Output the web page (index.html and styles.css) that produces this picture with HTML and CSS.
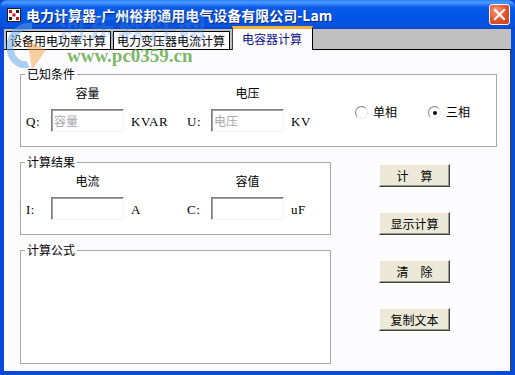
FILE: index.html
```html
<!DOCTYPE html>
<html lang="zh-CN">
<head>
    <meta charset="UTF-8">
    <title>电力计算器</title>
    <link rel="stylesheet" href="styles.css">
</head>
<body>
    <div class="window">
        <div class="titlebar">
            <svg class="app-icon" width="14" height="14" viewBox="0 0 14 14">
                <rect x="0.5" y="0.5" width="13" height="13" fill="#fff" stroke="#202020"/>
                <rect x="2" y="2" width="3" height="3" fill="#d01010"/>
                <rect x="9" y="2" width="3" height="3" fill="#202020"/>
                <rect x="5.5" y="5.5" width="3" height="3" fill="#d01010"/>
                <rect x="2" y="9" width="3" height="3" fill="#202020"/>
                <rect x="9" y="9" width="3" height="3" fill="#d01010"/>
            </svg>
            <span class="title">电力计算器-广州裕邦通用电气设备有限公司-Lam</span>
            <button class="close">
                <svg width="13" height="13" viewBox="0 0 13 13">
                    <path d="M2 2 L11 11 M11 2 L2 11" stroke="#fff" stroke-width="2.2" stroke-linecap="square"/>
                </svg>
            </button>
        </div>
        <div class="frame">
            <div class="tabs">
                <div class="tab">设备用电功率计算</div>
                <div class="tab">电力变压器电流计算</div>
                <div class="tab active">电容器计算</div>
            </div>
            <div class="panel">
                <fieldset class="group">
                    <legend>已知条件</legend>
                    <div class="fields">
                        <span class="head col-a">容量</span>
                        <span class="head col-b">电压</span>
                        <span class="sym">Q:</span>
                        <input class="box" placeholder="容量">
                        <span class="unit">KVAR</span>
                        <span class="sym">U:</span>
                        <input class="box" placeholder="电压">
                        <span class="unit">KV</span>
                        <div class="radios">
                            <span class="radio"></span><span class="radio-label">单相</span>
                            <span class="radio checked"></span><span class="radio-label">三相</span>
                        </div>
                    </div>
                </fieldset>
                <div class="lower">
                    <div class="left">
                        <fieldset class="group">
                            <legend>计算结果</legend>
                            <div class="fields">
                                <span class="head col-a">电流</span>
                                <span class="head col-b">容值</span>
                                <span class="sym">I:</span>
                                <input class="box">
                                <span class="unit">A</span>
                                <span class="sym">C:</span>
                                <input class="box">
                                <span class="unit">uF</span>
                            </div>
                        </fieldset>
                        <fieldset class="group formula">
                            <legend>计算公式</legend>
                        </fieldset>
                    </div>
                    <div class="actions">
                        <button class="btn">计　算</button>
                        <button class="btn">显示计算</button>
                        <button class="btn">清　除</button>
                        <button class="btn">复制文本</button>
                    </div>
                </div>
            </div>
        </div>

        <!-- site watermark drawn over the screenshot -->
        <div class="watermark">
            <svg class="wm-logo" width="52" height="52" viewBox="0 0 52 52">
                <path d="M30 6 C12 6 4 22 10 36 C14 44 22 46 26 44" fill="none" stroke="#5aa0e8" stroke-width="7" opacity="0.5"/>
                <path d="M24 20 L44 30 L30 50 L28 36 Z" fill="#f0a040" opacity="0.5"/>
            </svg>
            <span class="wm-name">河东软件网</span>
            <span class="wm-url">www.pc0359.cn</span>
        </div>
    </div>
</body>
</html>
```

FILE: styles.css
```css
body {
    margin: 0;
    font-family: "Noto Sans CJK SC", sans-serif;
    font-size: 12px;
    color: #000;
}
.window {
    position: relative;
    width: 515px;
    height: 375px;
    display: flex;
    flex-direction: column;
    background: #0a4ad8;
    overflow: hidden;
}
.titlebar {
    height: 29px;
    display: flex;
    align-items: center;
    padding: 0 5px 0 7px;
    background: linear-gradient(#2a7cf6 0%, #4a9aff 8%, #0a5ae8 25%, #0055e6 60%, #0a52dc 90%, #0a48c8 100%);
    border-radius: 7px 7px 0 0;
}
.app-icon {
    margin-right: 5px;
}
.title {
    flex: 1;
    font-size: 14px;
    font-weight: bold;
    color: #fff;
    text-shadow: 1px 1px 0 #0a2a80;
    white-space: nowrap;
}
.close {
    width: 21px;
    height: 21px;
    padding: 0;
    display: flex;
    align-items: center;
    justify-content: center;
    border: 1px solid #fff;
    border-radius: 3px;
    background: radial-gradient(circle at 35% 30%, #f49a7a, #e0512a 55%, #c8401e);
}
.frame {
    flex: 1;
    display: flex;
    flex-direction: column;
    padding: 0 4px 4px;
}
.tabs {
    height: 20px;
    display: flex;
    align-items: flex-end;
    padding-left: 2px;
    background: #c0c0c0;
}
.tab {
    height: 17px;
    line-height: 17px;
    padding: 0 4px 0 3px;
    margin-right: 2px;
    background: #fcfcfe;
    border: 1px solid #000;
    border-bottom: none;
    white-space: nowrap;
}
.tab.active {
    position: relative;
    z-index: 1;
    height: 21px;
    line-height: 20px;
    margin-bottom: -1px;
    margin-right: 0;
    padding: 0 10px 0 9px;
    color: #10108c;
    border-top: 3px solid #f6b13c;
    border-color: #f6b13c #000 transparent #404040;
}
.panel {
    flex: 1;
    display: flex;
    flex-direction: column;
    padding: 17px 13px 0 16px;
    background: #fcfcfe;
    border-top: 1px solid #000;
    border-right: 1px solid #404040;
}
.group {
    margin: 0;
    padding: 0 0 14px 5px;
    min-width: 0;
    border: 1px solid #a8a8a8;
    background: #fff;
}
.group legend {
    padding: 0 2px;
    margin-left: -1px;
    line-height: 14px;
    background: #fcfcfe;
}
.fields {
    display: grid;
    grid-template-columns: 25px 73px 63px 24px 73px 71px 1fr;
    grid-template-rows: 14px 23px;
    row-gap: 9px;
    align-items: center;
    margin-top: 5px;
}
.head {
    grid-row: 1;
    text-align: center;
    line-height: 14px;
}
.col-a {
    grid-column: 2;
}
.col-b {
    grid-column: 5;
}
.sym,
.unit {
    grid-row: 2;
    font-family: "Liberation Serif", serif;
    font-size: 13px;
    letter-spacing: 0.5px;
    padding-top: 2px;
}
.unit {
    padding-left: 7px;
}
.box {
    grid-row: 2;
    width: 73px;
    height: 23px;
    box-sizing: border-box;
    margin: 0;
    padding: 0 2px;
    font: 12px "Noto Sans CJK SC", sans-serif;
    background: #fff;
    border: 1px solid;
    border-color: #808080 #f4f4f4 #f4f4f4 #808080;
    box-shadow: inset 1px 1px 0 #a0a0a0;
    outline: none;
}
.box::placeholder {
    color: #a8a8a8;
}
.radios {
    grid-row: 2;
    align-self: start;
    margin-top: -4px;
    display: flex;
    align-items: center;
    line-height: 14px;
    white-space: nowrap;
}
.radio {
    flex: none;
    width: 11px;
    height: 11px;
    border-radius: 50%;
    border: 1px solid;
    border-color: #808080 #e8e8e8 #e8e8e8 #808080;
    background: #fff;
    position: relative;
}
.radio.checked::after {
    content: "";
    position: absolute;
    left: 4px;
    top: 4px;
    width: 4px;
    height: 4px;
    border-radius: 50%;
    background: #000;
}
.radio-label {
    margin-left: 5px;
    margin-right: 31px;
}
.lower {
    display: flex;
    margin-top: 8px;
}
.left {
    width: 311px;
}
.left .group + .group {
    margin-top: 8px;
}
.formula {
    height: 121px;
    box-sizing: border-box;
}
.actions {
    display: flex;
    flex-direction: column;
    gap: 25px;
    margin-left: 48px;
    padding-top: 9px;
}
.btn {
    width: 71px;
    height: 23px;
    padding: 0;
    font: 12px "Noto Sans CJK SC", sans-serif;
    color: #000;
    background: #ece9d8;
    border: 1px solid;
    border-color: #fff #404040 #404040 #fff;
    box-shadow: inset -1px -1px 0 #9d9a8c;
}
.watermark {
    position: absolute;
    left: 0;
    top: 0;
    width: 260px;
    height: 70px;
    pointer-events: none;
}
.wm-logo {
    position: absolute;
    left: 2px;
    top: 20px;
}
.wm-name {
    position: absolute;
    left: 58px;
    top: 6px;
    font-size: 28px;
    font-weight: bold;
    letter-spacing: 2px;
    color: rgba(70, 140, 230, 0.3);
}
.wm-url {
    position: absolute;
    left: 67px;
    top: 45px;
    font-family: "Liberation Serif", serif;
    font-size: 19px;
    font-weight: bold;
    color: rgba(80, 160, 50, 0.75);
}
```
